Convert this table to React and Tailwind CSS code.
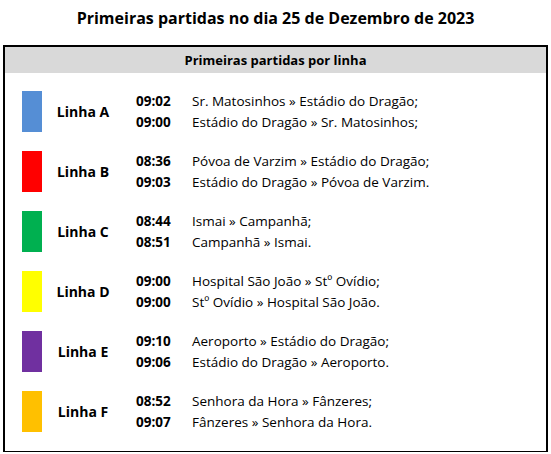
const linhas = [
  {
    nome: "Linha A",
    cor: "bg-[#558ed5]",
    partidas: [
      ["09:02", "Sr. Matosinhos » Estádio do Dragão;"],
      ["09:00", "Estádio do Dragão » Sr. Matosinhos;"],
    ],
  },
  {
    nome: "Linha B",
    cor: "bg-[#ff0000]",
    partidas: [
      ["08:36", "Póvoa de Varzim » Estádio do Dragão;"],
      ["09:03", "Estádio do Dragão » Póvoa de Varzim."],
    ],
  },
  {
    nome: "Linha C",
    cor: "bg-[#00b050]",
    partidas: [
      ["08:44", "Ismai » Campanhã;"],
      ["08:51", "Campanhã » Ismai."],
    ],
  },
  {
    nome: "Linha D",
    cor: "bg-[#ffff00]",
    partidas: [
      ["09:00", "Hospital São João » Stº Ovídio;"],
      ["09:00", "Stº Ovídio » Hospital São João."],
    ],
  },
  {
    nome: "Linha E",
    cor: "bg-[#7030a0]",
    partidas: [
      ["09:10", "Aeroporto » Estádio do Dragão;"],
      ["09:06", "Estádio do Dragão » Aeroporto."],
    ],
  },
  {
    nome: "Linha F",
    cor: "bg-[#ffc000]",
    partidas: [
      ["08:52", "Senhora da Hora » Fânzeres;"],
      ["09:07", "Fânzeres » Senhora da Hora."],
    ],
  },
];

const App = () => {
  return (
    <div className="w-[551px] h-[454px] bg-white text-black font-['Open_Sans',sans-serif]">
      <h1 className="h-[45px] pt-[6px] text-center text-[16px] font-bold leading-[24px]">
        Primeiras partidas no dia 25 de Dezembro de 2023
      </h1>
      <div className="ml-[3px] w-[545px] h-[407px] border-2 border-black border-b-[1.5px]">
        <div className="h-[26px] bg-[#d9d9d9] text-center text-[13px] font-bold leading-[26px]">
          Primeiras partidas por linha
        </div>
        <div className="flex flex-col gap-[19px] pt-[18px]">
          {linhas.map((l) => (
            <div key={l.nome} className="flex items-center h-[41px]">
              <div className={`ml-[17px] w-[20px] h-[41px] ${l.cor}`}></div>
              <div className="w-[82px] text-center text-[14px] font-bold">{l.nome}</div>
              <div className="flex flex-col ml-[12px]">
                {l.partidas.map(([hora, trajeto], i) => (
                  <div key={i} className="flex leading-[21px]">
                    <span className="w-[56px] text-[13.5px] font-bold">{hora}</span>
                    <span className="text-[13.5px]">{trajeto}</span>
                  </div>
                ))}
              </div>
            </div>
          ))}
        </div>
      </div>
    </div>
  );
};

export default App;
